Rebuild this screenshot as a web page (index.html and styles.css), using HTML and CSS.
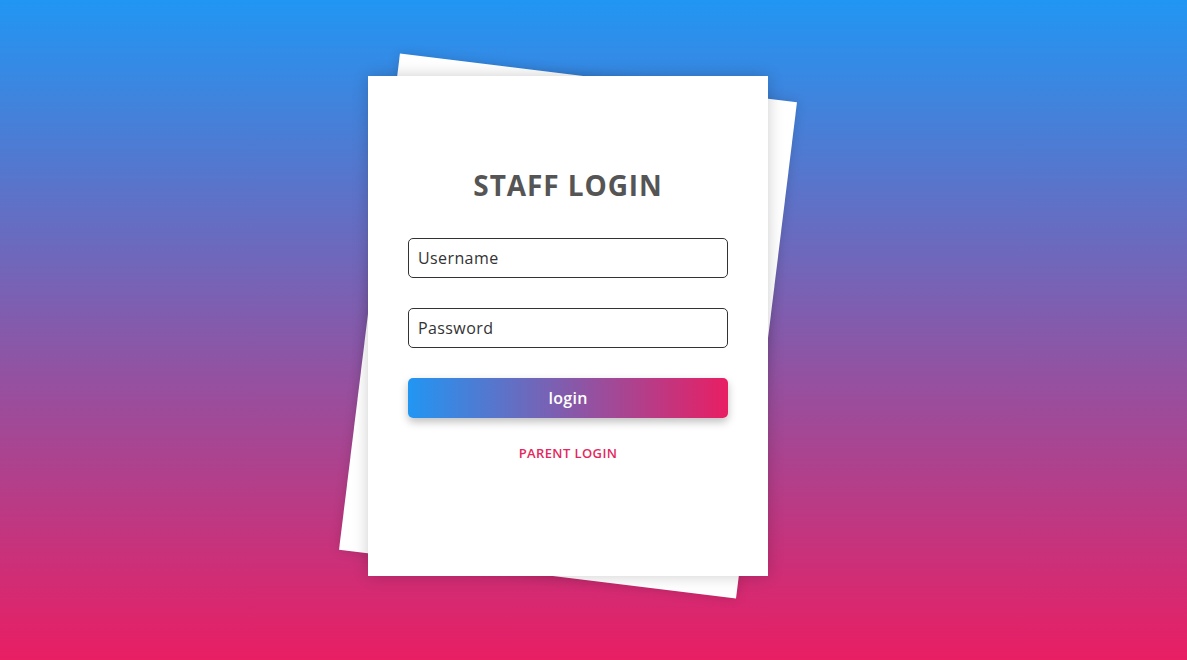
FILE: index.html
```html
<!DOCTYPE html>
<html lang="en">
<head>
<meta charset="utf-8">
<title>Staff Login</title>
<link rel="stylesheet" href="styles.css">
</head>
<body>
<main class="stage">
  <div class="stack">
    <div class="sheet-back"></div>
    <form class="card">
      <h1 class="title">STAFF LOGIN</h1>
      <input class="field" type="text" placeholder="Username">
      <input class="field" type="password" placeholder="Password">
      <button class="btn" type="button">login</button>
      <a class="alt-link" href="#">PARENT LOGIN</a>
    </form>
  </div>
</main>
</body>
</html>
```
FILE: styles.css
```css
* { box-sizing: border-box; }
html, body { margin: 0; height: 100%; }
body {
  background: linear-gradient(to bottom, #2196f3 0%, #e91e63 100%);
  font-family: "Open Sans", "Noto Sans", sans-serif;
  overflow: hidden;
}
.stage {
  height: 660px;
  display: flex;
  justify-content: flex-start;
  align-items: flex-start;
  padding: 76px 0 0 368px;
}
.stack {
  position: relative;
  width: 400px;
  height: 500px;
}
.sheet-back {
  position: absolute;
  inset: 0;
  background: #fff;
  transform: rotate(7deg);
  box-shadow: 0 0 12px rgba(0,0,0,0.15);
}
.card {
  position: relative;
  width: 400px;
  height: 500px;
  background: #fff;
  box-shadow: 0 0 15px rgba(0,0,0,0.2);
  display: flex;
  flex-direction: column;
  align-items: center;
  padding: 89px 40px 0;
}
.title {
  margin: 0 0 33px;
  font-size: 28px;
  font-weight: 700;
  color: #555;
  line-height: 40px;
  letter-spacing: 0.9px;
}
.field {
  width: 320px;
  height: 40px;
  border: 1px solid #333;
  border-radius: 5px;
  padding: 0 9px;
  font-family: inherit;
  font-size: 16px;
  letter-spacing: 0.4px;
  color: #333;
  margin-bottom: 30px;
  outline: none;
}
.field::placeholder { color: #333; opacity: 1; }
.btn {
  width: 320px;
  height: 40px;
  border: none;
  border-radius: 5px;
  background: linear-gradient(to right, #2196f3, #e91e63);
  color: #fff;
  font-family: inherit;
  font-size: 16px;
  font-weight: 600;
  letter-spacing: 0.3px;
  box-shadow: 0 4px 8px rgba(0,0,0,0.25);
  margin-bottom: 25px;
}
.alt-link {
  color: #e4285d;
  font-size: 13px;
  font-weight: 600;
  letter-spacing: 0.4px;
  text-decoration: none;
  line-height: 20px;
}
```
